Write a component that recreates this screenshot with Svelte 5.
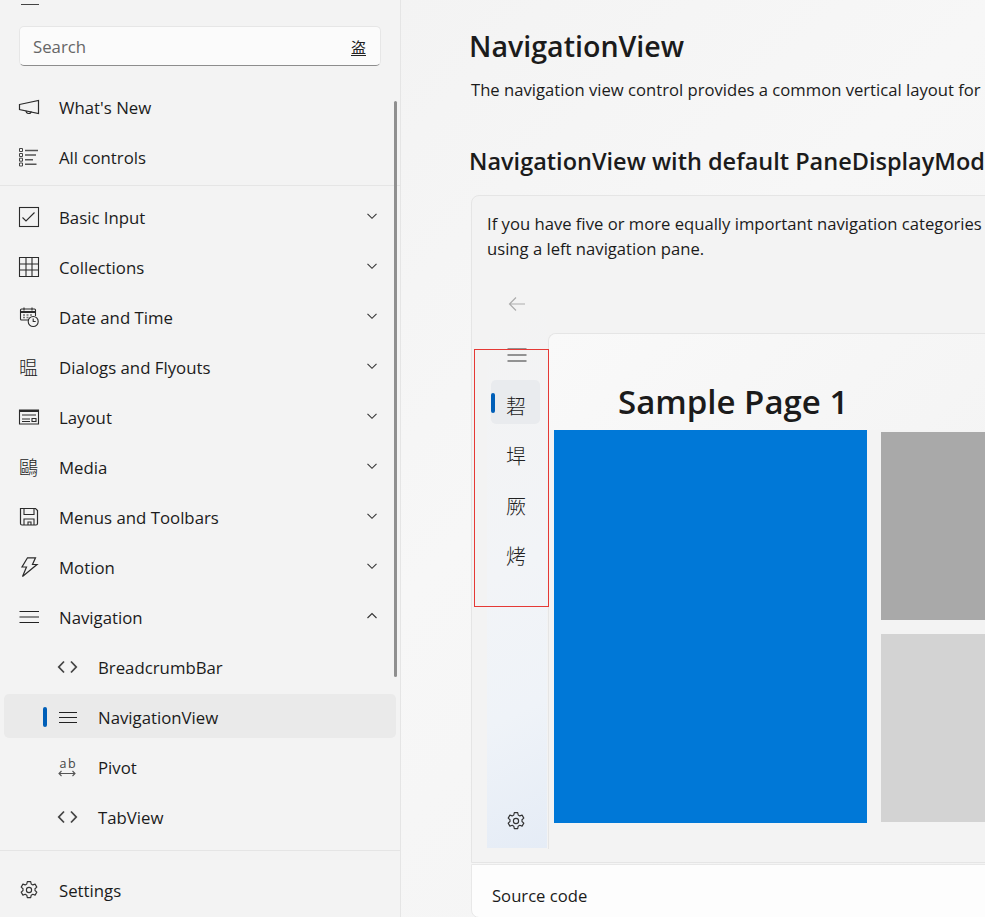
<script>
  const cjk = ["䂮", "垾", "厥", "烤"];
  const top = [
    { icon: "megaphone", label: "What's New" },
    { icon: "list", label: "All controls" }
  ];
  const groups = [
    { icon: "check", label: "Basic Input" },
    { icon: "grid", label: "Collections" },
    { icon: "calendar", label: "Date and Time" },
    { glyph: "㬈", label: "Dialogs and Flyouts" },
    { icon: "layout", label: "Layout" },
    { glyph: "鷗", label: "Media" },
    { icon: "save", label: "Menus and Toolbars" },
    { icon: "bolt", label: "Motion" }
  ];
  const subs = [
    { icon: "code", label: "BreadcrumbBar" },
    { icon: "bars", label: "NavigationView", active: true },
    { icon: "pivot", label: "Pivot" },
    { icon: "code", label: "TabView" }
  ];
</script>

{#snippet gear(size)}
  <svg width={size} height={size} viewBox="0 0 20 20" fill="none" stroke="#333" stroke-width="1.15" stroke-linejoin="round">
    <path d="M8.300 1.600h3.400l.5 2.400 1.600.9 2.300-.8 1.700 3-1.800 1.600v1.800l1.800 1.600-1.700 3-2.300-.8-1.600.9-.5 2.400H8.300l-.5-2.400-1.600-.9-2.300.8-1.700-3 1.800-1.600V8.700L2.200 7.100l1.700-3 2.300.8 1.600-.9z"/>
    <circle cx="10" cy="10" r="2.6"/>
  </svg>
{/snippet}

{#snippet icon(name)}
  <svg class="ic" width="20" height="20" viewBox="0 0 20 20" fill="none" stroke="#2b2b2b" stroke-width="1.100">
    {#if name === "megaphone"}
      <path d="M.5 7.500 19.500 3.500v13L.5 12.500z" stroke-width="1.200"/><path d="M7 13.800c0 3.400 5 3.400 5.200.6"/>
    {:else if name === "list"}
      <path d="M6 3.500h13M6 8h11M6 12.700h8M6 17.200h11.500" stroke="#555" stroke-width="1.400"/>
      <path d="M.5 1.500h3v3h-3zM.5 6.500h3v3h-3zM.5 11.200h3v3h-3zM.5 16h3v3h-3z" stroke="#444" stroke-width="1"/>
    {:else if name === "check"}
      <rect x=".5" y=".5" width="19" height="19"/><path d="m3.500 10.500 3.500 3.500 8.500-8.500"/>
    {:else if name === "grid"}
      <path d="M.5.500h19v19H.5zM7 .5v19M13 .5v19M.5 7h19M.5 13h19"/>
    {:else if name === "calendar"}
      <path d="M14 13H2.500a1 1 0 0 1-1-1V3a1 1 0 0 1 1-1h13a1 1 0 0 1 1 1v6"/><path d="M1.500 5h15" stroke-width="2"/><path d="M5 .5v3M13 .5v3"/>
      <path d="M4 8h2M7.500 8h2M11 8h2M4 10.500h2M7.500 10.500h2" stroke="#777" stroke-width="1.500"/>
      <circle cx="14.200" cy="14.500" r="5" fill="#f3f3f3"/><path d="M14.200 11.500v3h2.500"/>
    {:else if name === "layout"}
      <path d="M.5 3h19v14H.5z"/><path d="M.5 4h19" stroke-width="2"/><path d="M3 8h14M3 12h8M3 14.500h8M13 11.500h4v3h-4z"/>
    {:else if name === "save"}
      <path d="M1.500 1.500h15l2 2v13a1.500 1.500 0 0 1-1.500 1.500H3a1.500 1.500 0 0 1-1.500-1.500z" stroke-width="1.200"/><path d="M5 1.500v6h10v-6M5 18v-6h10v6M9 18v-3h3v3"/>
    {:else if name === "bolt"}
      <path d="M8.500.8h8l-3 6.700h4.500L3.500 19.500l4-9.500H3z" stroke-width="1.200"/>
    {:else if name === "code"}
      <path d="M6 4.500.8 10 6 15.500M13 4.500l5.200 5.500-5.200 5.500" stroke-width="1.800" stroke="#444"/>
    {:else if name === "pivot"}
      <path d="M1 16.500h16M3.500 14 1 16.500 3.500 19M14.500 14 17 16.500 14.500 19" stroke="#555"/>
      <text x="1.500" y="11" class="ab">a</text>
      <text x="10" y="11" class="ab">b</text>
    {:else if name === "bars"}
      <path d="M1 5.500h18M1 10.500h18M1 15.500h18" stroke="#222"/>
    {:else if name === "bars-wide"}
      <path d="M.5 4.500h19.500M.5 10h19.500M.5 15.500h19.500" stroke="#222"/>
    {/if}
  </svg>
{/snippet}

{#snippet row(item)}
  <div class="row">
    <span class="lead">
      {#if item.glyph}<span class="glyph">{item.glyph}</span>{:else}{@render icon(item.icon)}{/if}
    </span>
    <span class="label">{item.label}</span>
    <svg class="chev" width="12" height="12" viewBox="0 0 12 12" fill="none" stroke="#333" stroke-width="1.100"><path d="m1.500 3.800 4.500 4.500 4.500-4.500"/></svg>
  </div>
{/snippet}

<div class="page">
  <aside>
    <div class="menu"><span></span></div>
    <div class="search">
      <span class="ph">Search</span>
      <span class="search-glyph">盗</span>
    </div>
    <nav class="nav-top">
      {#each top as item}
        <div class="row">
          <span class="lead">{@render icon(item.icon)}</span>
          <span class="label">{item.label}</span>
        </div>
      {/each}
    </nav>
    <div class="sep"></div>
    <nav class="nav-groups">
      {#each groups as item}
        {@render row(item)}
      {/each}
      <div class="row">
        <span class="lead">{@render icon("bars-wide")}</span>
        <span class="label">Navigation</span>
        <svg class="chev" width="12" height="12" viewBox="0 0 12 12" fill="none" stroke="#333" stroke-width="1.100"><path d="m1.500 8 4.500-4.500 4.500 4.500"/></svg>
      </div>
      {#each subs as item}
        <div class="row sub" class:active={item.active}>
          {#if item.active}<span class="pill"></span>{/if}
          <span class="lead small">{@render icon(item.icon)}</span>
          <span class="label">{item.label}</span>
        </div>
      {/each}
    </nav>
    <div class="sep bottom"></div>
    <div class="row settings">
      <span class="lead">{@render gear(20)}</span>
      <span class="label">Settings</span>
    </div>
    <div class="scrollbar"></div>
  </aside>

  <main>
    <h1>NavigationView</h1>
    <p class="desc">The navigation view control provides a common vertical layout for</p>
    <h2>NavigationView with default PaneDisplayMod</h2>
    <section class="card">
      <p class="intro">If you have five or more equally important navigation categories<br />using a left navigation pane.</p>
      <div class="stage">
        <div class="pane">
          <div class="back">
            <svg width="18" height="16" viewBox="0 0 18 16" fill="none" stroke="#adadad" stroke-width="1.200"><path d="M17 8H1.500M8 1.500 1.500 8 8 14.500"/></svg>
          </div>
          <div class="pane-menu">
            <svg width="20" height="14" viewBox="0 0 20 14" fill="none" stroke="#333" stroke-width="1.200"><path d="M.5 1h19M.5 7h19M.5 13h19"/></svg>
          </div>
          <ul class="pane-items">
            {#each cjk as c, i}
              <li class:on={i === 0}>
                {#if i === 0}<span class="pill pane-pill"></span>{/if}
                <span>{c}</span>
              </li>
            {/each}
          </ul>
          <div class="pane-gear">{@render gear(20)}</div>
        </div>
        <div class="content">
          <div class="content-head"><span class="sample">Sample Page 1</span></div>
          <div class="tiles">
            <div class="tile blue"></div>
            <div class="stack">
              <div class="tile gray"></div>
              <div class="tile light"></div>
            </div>
          </div>
        </div>
      </div>
      <div class="red-box"></div>
    </section>
    <div class="source">Source code</div>
  </main>
</div>

<style>
  :global(body) {
    margin: 0;
    background: #f3f3f3;
  }
  .page {
    display: flex;
    width: 985px;
    height: 917px;
    overflow: hidden;
    font-family: "Open Sans", "Noto Sans", sans-serif;
    color: #1b1b1b;
    background: #f5f5f5;
  }
  aside {
    position: relative;
    width: 400px;
    flex: none;
    border-right: 1px solid #e5e5e5;
    background: #f3f3f3;
    display: flex;
    flex-direction: column;
  }
  aside > * {
    flex: none;
  }
  .menu {
    height: 26px;
    padding-left: 21px;
    box-sizing: border-box;
  }
  .menu span {
    display: block;
    width: 18px;
    height: 4px;
    border-bottom: 1px solid #444;
  }
  .search {
    display: flex;
    align-items: center;
    justify-content: space-between;
    margin: 0 19px;
    height: 40px;
    box-sizing: border-box;
    padding: 0 14px 0 13px;
    background: #fbfbfb;
    border: 1px solid #e6e6e6;
    border-bottom-color: #8d8d8d;
    border-radius: 5px;
  }
  .ph {
    color: #666;
    font-size: 16.8px;
  }
  .search-glyph {
    font-family: "Noto Sans CJK SC", sans-serif;
    font-size: 15px;
    line-height: 16px;
    margin-top: 3px;
    border-bottom: 1px solid #222;
    color: #222;
  }
  .nav-top {
    margin-top: 16px;
    display: flex;
    flex-direction: column;
  }
  .row {
    position: relative;
    display: flex;
    align-items: center;
    height: 50px;
    flex: none;
    padding-left: 19px;
    box-sizing: border-box;
  }
  .lead {
    display: flex;
    width: 40px;
    flex: none;
  }
  .ic {
    display: block;
    overflow: visible;
  }
  .ab {
    font-family: "Open Sans", sans-serif;
    font-size: 12.5px;
    fill: #444;
    stroke: none;
  }
  .glyph {
    font-family: "Noto Sans CJK SC", sans-serif;
    font-weight: 300;
    font-size: 19px;
    line-height: 20px;
    color: #222;
  }
  .label {
    flex: 1;
    font-size: 16.8px;
    white-space: nowrap;
  }
  .chev {
    margin-right: 22px;
    margin-top: -2px;
  }
  .sep {
    height: 1px;
    background: #e5e5e5;
    margin-top: 3px;
  }
  .nav-groups {
    margin-top: 6px;
    display: flex;
    flex-direction: column;
  }
  .sub {
    padding-left: 58px;
  }
  .sub.active::before {
    content: "";
    position: absolute;
    left: 4px;
    right: 4px;
    top: 2px;
    bottom: 4px;
    background: #eaeaea;
    border-radius: 5px;
    z-index: 0;
  }
  .sub > * {
    position: relative;
  }
  .pill {
    position: absolute;
    left: 43px;
    top: 15px;
    width: 4px;
    height: 20px;
    border-radius: 2px;
    background: #005fb8;
  }
  .sub > .pill {
    position: absolute;
  }
  .sep.bottom {
    margin-top: 8px;
  }
  .settings {
    height: 78px;
  }
  .scrollbar {
    position: absolute;
    left: 394px;
    top: 101px;
    width: 3px;
    height: 576px;
    background: #8f8f8f;
    border-radius: 2px;
  }
  main {
    flex: 1;
    min-width: 0;
    padding-left: 68px;
    overflow: hidden;
    background: linear-gradient(135deg, #f3f3f3, #f7f7f7 40%, #f3f3f3);
  }
  h1 {
    margin: 26px 0 0;
    font-size: 28.600px;
    line-height: 40px;
    font-weight: 600;
    white-space: nowrap;
  }
  .desc {
    margin: 12px 0 0 2px;
    font-size: 16.650px;
    line-height: 24px;
    white-space: nowrap;
  }
  h2 {
    margin: 43px 0 0;
    font-size: 23.500px;
    line-height: 32px;
    font-weight: 600;
    white-space: nowrap;
  }
  .card {
    position: relative;
    margin: 18px 0 0 2px;
    width: 720px;
    height: 668px;
    box-sizing: border-box;
    background: #f3f3f3;
    border: 1px solid #e5e5e5;
    border-radius: 8px 8px 0 0;
  }
  .intro {
    margin: 15px 15px 0;
    font-size: 16.650px;
    line-height: 25px;
    white-space: nowrap;
  }
  .stage {
    display: flex;
    margin: 19px 0 0 15px;
    height: 568px;
  }
  .pane {
    width: 60px;
    flex: none;
    display: flex;
    flex-direction: column;
    align-items: stretch;
    background: linear-gradient(155deg, #f3f3f3 8%, #f2f4f7 50%, #eff3f8 75%, #e5ecf6);
  }
  .back {
    height: 50px;
    display: flex;
    align-items: center;
    padding-left: 21px;
    margin-top: -1px;
    margin-bottom: 1px;
  }
  .pane-menu {
    height: 50px;
    display: flex;
    align-items: center;
    padding-left: 20px;
  }
  .pane-items {
    list-style: none;
    margin: 0;
    padding: 0 0 0 4px;
    flex: 1;
    display: flex;
    flex-direction: column;
  }
  .pane-items li {
    position: relative;
    width: 49px;
    height: 44px;
    box-sizing: border-box;
    padding: 6px 0 0 1px;
    margin-bottom: 6px;
    border-radius: 5px;
    display: flex;
    align-items: center;
    justify-content: center;
    font-family: "Noto Sans CJK SC", sans-serif;
    font-weight: 300;
    font-size: 20px;
    color: #222;
  }
  .pane-items li.on {
    background: #e9ebee;
  }
  .pane-pill {
    left: 0;
    top: 13px;
  }
  .pane-gear {
    height: 37px;
    padding-left: 19px;
  }
  .content {
    margin-left: 1px;
    width: 600px;
    margin-top: 53px;
    margin-bottom: -1px;
    border-top: 1px solid #e5e5e5;
    border-left: 1px solid #e5e5e5;
    border-top-left-radius: 8px;
    background: #f3f3f3;
    overflow: hidden;
  }
  .content-head {
    height: 96px;
    box-sizing: border-box;
    padding: 46px 0 0 69px;
    background: linear-gradient(135deg, #f9f9f9, #f3f3f3);
  }
  .sample {
    font-size: 33px;
    line-height: 44px;
    font-weight: 600;
  }
  .tiles {
    display: flex;
    gap: 14px;
    padding-left: 5px;
  }
  .tile.blue {
    width: 313px;
    height: 393px;
    background: #0078d7;
  }
  .stack {
    display: flex;
    flex-direction: column;
    gap: 14px;
    padding-top: 2px;
  }
  .tile.gray {
    width: 200px;
    height: 188px;
    background: #a9a9a9;
  }
  .tile.light {
    width: 200px;
    height: 188px;
    background: #d3d3d3;
  }
  .red-box {
    position: absolute;
    left: 2px;
    top: 153px;
    width: 73px;
    height: 256px;
    border: 1px solid #e53935;
  }
  .source {
    margin: 1px 0 0 2px;
    width: 720px;
    height: 54px;
    box-sizing: border-box;
    padding: 19px 0 0 20px;
    font-size: 16.650px;
    line-height: 24px;
    background: #fdfdfd;
    border: 1px solid #e8e8e8;
    border-radius: 0 0 8px 8px;
  }
</style>
